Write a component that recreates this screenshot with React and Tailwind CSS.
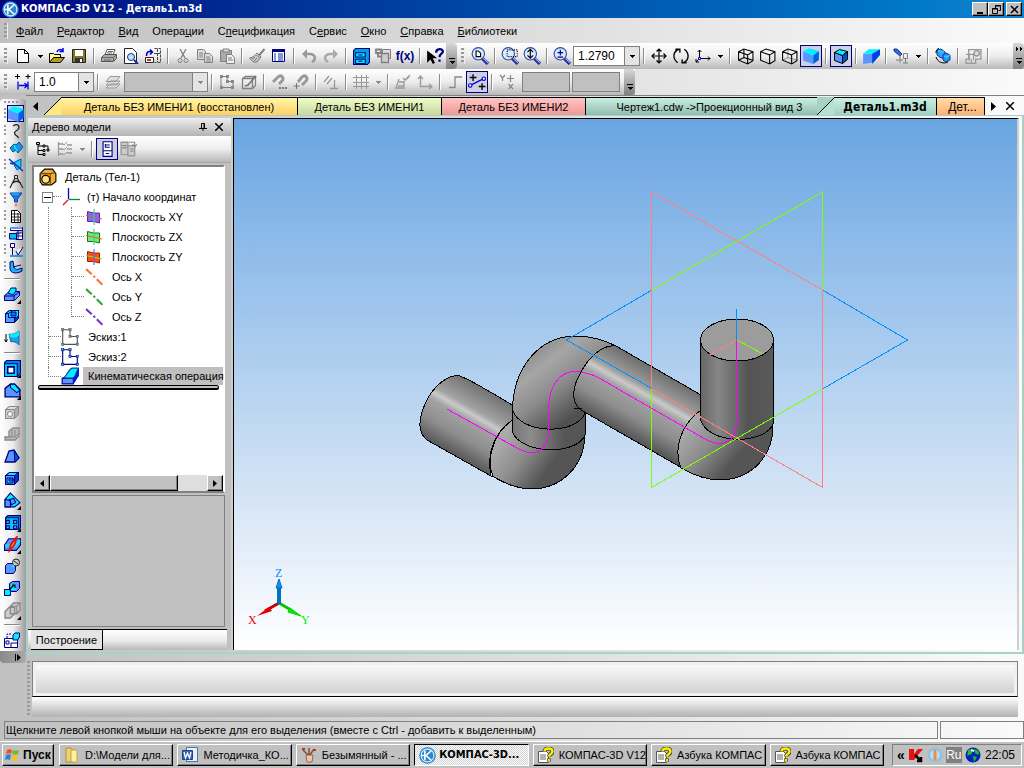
const NAVY = '#00007f';
const BLUE = '#5a96ff';
const CYAN = '#00f0ff';
const GRAY = '#808080';

function Svg({ size = 16, children }) {
	return (
		<svg width={size} height={size} viewBox="0 0 16 16" fill="none" className="shrink-0" aria-hidden="true">
			{children}
		</svg>
	);
}

function Magnifier({ children }) {
	return (
		<Svg size={18}>
			<path d="M10 10l5 5" stroke="#2a2a8c" strokeWidth="3" />
			<path d="M11 10l4 4" stroke="#8fb8ff" />
			<circle cx="6.5" cy="6" r="5.5" fill="#d9ecff" stroke="#2a4aa0" />
			{children}
		</Svg>
	);
}

function Solid({ front = BLUE, top = CYAN, side = '#0030d0', stroke = NAVY, children }) {
	return (
		<Svg>
			<path d="M1.5 5.5l4-3h9v8l-4 4h-9z" fill={side} stroke={stroke} />
			<path d="M1.5 5.5l4-3h9l-4 3z" fill={top} stroke={stroke} />
			<path d="M1.5 5.5h9v9h-9z" fill={front} stroke={stroke} />
			{children}
		</Svg>
	);
}

function WireBox({ hidden }) {
	return (
		<Svg size={17}>
			{hidden && <path d="M6.500 1v8L15 11.500M1.500 11.500l5-2.500" stroke={hidden} />}
			<path d="M1.500 3.500l5-2.500 8.500 2.500v8.500l-5 3-8.500-3.500zM1.500 3.500l8.500 3v8.500M10 6.500l5-3" stroke="#000" />
		</Svg>
	);
}

function Plane({ fill, edge, line }) {
	return (
		<Svg>
			<path d="M1.500 2.500l6 1.500 6 0v10l-6-1.500h-6z" fill={fill} stroke={edge} />
			<path d="M0 6.500l16 3.500" stroke={line} strokeWidth="1.200" />
			<path d="M8 0v16" stroke={line === '#70e070' ? '#6060ff' : '#60c080'} strokeWidth="1.200" />
		</Svg>
	);
}

function Axis({ color }) {
	return (
		<Svg size={18}>
			<path d="M1 1l5 4.500M7.500 7l1.500 1.500M10.500 10l5 5" stroke={color} strokeWidth="1.800" />
		</Svg>
	);
}

function Sketch({ color, dot }) {
	return (
		<Svg size={18}>
			<path d="M1.500 1.500h6.500v6h6.500v7h-13z" stroke={color} />
			{[[1.5, 1.5], [8, 1.5], [8, 7.5], [14.5, 7.5], [14.5, 14.5], [1.5, 14.5]].map(([x, y]) => (
				<rect key={`${x}-${y}`} x={x - 1} y={y - 1} width="2" height="2" fill={dot} stroke={color} strokeWidth=".5" />
			))}
		</Svg>
	);
}

function Logo() {
	return (
		<Svg size={17}>
			<circle cx="8" cy="8" r="7.800" fill="#2b86d0" />
			<circle cx="8" cy="8" r="6" stroke="#d8efff" />
			<path d="M5.500 3.500v9M6.500 8l5-4.500M6.500 8l5 4.500M2 8h4" stroke="#fff" strokeWidth="1.500" />
		</Svg>
	);
}

function HelpDoc() {
	return (
		<Svg>
			<path d="M.5 4.500h8l2 2v9h-10z" fill="#fff" stroke="#555" />
			<path d="M2 8h6M2 10h6M2 12h6" stroke="#666" />
			<path d="M6.500 4.500c0-4 8-4 8 0 0 2.500-3.500 2.500-3.500 5M11 11.500v3" stroke="#333" strokeWidth="4" />
			<path d="M6.500 4.500c0-4 8-4 8 0 0 2.500-3.500 2.500-3.500 5M11 12v2.500" stroke="#ffee00" strokeWidth="2.500" />
		</Svg>
	);
}

const icons = {
	newDoc: <Svg><path d="M2.500 1.500h7l4 4v9h-11z" fill="#fff" stroke="#000" /><path d="M9.500 1.500v4h4" stroke="#000" /></Svg>,
	open: <Svg><path d="M.5 14.500v-9h4l1 1h6v3" fill="#fffb90" stroke="#000" /><path d="M.5 14.500l4-5h11l-4 5z" fill="#b0a020" stroke="#000" /><path d="M8 4c1-3 4-3 6-1m0-3v3.500h-3.500" stroke="#0000e0" strokeWidth="1.500" /></Svg>,
	save: <Svg><path d="M1.500 1.500h13v13h-13z" fill="#857820" stroke="#222" /><path d="M4 2h8v6H4z" fill="#fff" /><path d="M4 10h8v4.500H4z" fill="#333" /><path d="M9 11h2v3H9z" fill="#fff" /></Svg>,
	print: <Svg><path d="M4 7l2-5.500h8L12 7" fill="#fff" stroke="#555" /><path d="M.5 9.500l3-3h12v4l-3 3H.5z" fill="#aaa" stroke="#555" /><path d="M.5 9.500h12v4M12.500 9.500l3-3M3 12h7M7 3.500h5M6 5h5" stroke="#666" /></Svg>,
	preview: <Svg><path d="M1.500.5h8l4 4v11h-12z" fill="#fff" stroke="#222" /><circle cx="8" cy="9" r="3.500" fill="#b9e4ff" stroke="#1a2a90" /><path d="M11 12l4 4" stroke="#1a2a90" strokeWidth="2" /></Svg>,
	swap: <Svg><path d="M9.500.5h6v14h-6M12.500 1v13M9 5.500h6" stroke="#444" strokeDasharray="3 1" /><path d="M1.500 8c0-5 3-5 5-4M5 1.500L7.500 4 5 6.500" stroke="#0000d0" strokeWidth="1.500" /><path d="M.5 9.500h8v5h-8z" fill="#fff" stroke="#222" /><path d="M2 11h4v2H2z" fill="#e02020" /></Svg>,
	cut: <Svg><path d="M5 1l5 9M11 1l-5 9" stroke={GRAY} strokeWidth="1.300" /><circle cx="5" cy="12.500" r="2" stroke={GRAY} /><circle cx="11" cy="12.500" r="2" stroke={GRAY} /></Svg>,
	copy: <Svg><path d="M.5 1.500h6l2 2v8h-8z" fill="#ddd" stroke={GRAY} /><path d="M7.500 5.500h5l3 3v6h-8z" fill="#ddd" stroke={GRAY} /><path d="M2 5h4M2 7h4M2 9h4M9 9h4M9 11h5M9 13h5" stroke={GRAY} /></Svg>,
	paste: <Svg><path d="M1.500 2.500h11v11h-11z" fill="#aaa" stroke={GRAY} /><path d="M4 1h6v3H4z" fill="#ddd" stroke={GRAY} /><path d="M7.500 6.500h5l3 3v6h-8z" fill="#eee" stroke={GRAY} /><path d="M9 10h4M9 12h5" stroke={GRAY} /></Svg>,
	brush: <Svg><path d="M15.500 1L10 7.500" stroke={GRAY} strokeWidth="2" /><path d="M8 5l4 4-4 5c-3 1-5-1-7.500-4C4 10 6 7 8 5z" fill="#c8c8c8" stroke="#777" /><path d="M3 11l3-2M5 13l3-3M7.500 7l3 3" stroke="#777" /></Svg>,
	sheet: <Svg><path d="M1.500 1.500h12v12h-12z" fill="#fff" stroke={NAVY} /><path d="M1 1h13v3H1z" fill={NAVY} /><path d="M3 6h2M7 6h5M3 8h2M7 8h5M3 10h2M7 10h5M3 12h2M7 12h5" stroke="#0030b0" /></Svg>,
	undo: <Svg><path d="M3 6h7c5 1 5 6 1 8" stroke="#999" strokeWidth="2.500" /><path d="M1 6l5-5v10z" fill="#999" /></Svg>,
	redo: <Svg><path d="M13 6H6c-5 1-5 6-1 8" stroke="#aaa" strokeWidth="2.500" /><path d="M15 6l-5-5v10z" fill="#aaa" /></Svg>,
	manager: <Svg size={17}><path d="M.5 2.500l2-2h13v13l-2 2H.5z" fill="#00a0e0" stroke={NAVY} /><path d="M2.500 4.500h9v4h-9zM2.500 10.500h9v4h-9z" fill={CYAN} stroke={NAVY} /><path d="M5 6.500h4M5 12.500h4" stroke={NAVY} /></Svg>,
	props: <Svg><path d="M7.500 1.500h8v9h-8z" fill="#ddd" stroke={GRAY} /><path d="M6.500 5.500h7v9h-7z" fill="#ccc" stroke={GRAY} strokeWidth="1.300" /><path d="M1 1.500h5v3.500H1zM3 5.500v3h4" stroke={GRAY} strokeWidth="1.800" /></Svg>,
	help: <Svg size={18}><path d="M1 3v11l3-3 2 4 2-1-2-4h4z" fill="#000" /><path d="M9 5c0-4 6-4 6-1 0 2-3 2-3 5M12 11v2" stroke={NAVY} strokeWidth="2" /></Svg>,
	zoomDoc: <Magnifier><path d="M4.500 3.500h2l2 2v3h-4z" fill="#fff" stroke="#000" /></Magnifier>,
	zoomWin: <Magnifier><path d="M5.500 2.500h9v6h-9z" stroke="#000" strokeDasharray="1 1" /></Magnifier>,
	zoomDyn: <Magnifier><path d="M6.500 2v8M4 4.500L6.500 2 9 4.500M4 7.500L6.500 10 9 7.500" stroke="#000" /></Magnifier>,
	zoomPm: <Magnifier><path d="M6.500 2.500v5M4 5h5M4 9h5" stroke={NAVY} /></Magnifier>,
	move: <Svg><path d="M8 1v14M1 8h14M5.500 3.500L8 1l2.500 2.500M5.500 12.500L8 15l2.500-2.500M3.500 5.500L1 8l2.500 2.500M12.500 5.500L15 8l-2.500 2.500" stroke="#000" strokeWidth="1.200" /></Svg>,
	rotate: <Svg size={18}><path d="M5 14C0 10 1 4 6 2M3 2h4v3M11 2c5 4 4 10-1 12M13 14H9v-3" stroke="#000" strokeWidth="1.200" /></Svg>,
	orient: <Svg><path d="M4.500 11V2M2.500 4l2-2 2 2M6 10.500h9M13 8.500l2 2-2 2M4 11l-3 3M1 11v3h3" stroke="#000" /><path d="M3.500 9.500h2v2h-2z" fill="#fff" stroke="#00f" /></Svg>,
	wire: <WireBox hidden="#000" />,
	noHidden: <WireBox />,
	thinHidden: <WireBox hidden="#999" />,
	shaded: <Svg size={18}><path d="M1 4l9 3.500V15L1 12z" fill={BLUE} /><path d="M1 4l5-3 9 2.500-5 4z" fill={CYAN} /><path d="M10 7.500l5-4v8L10 15z" fill="#0060e8" /></Svg>,
	shadedEdge: <Svg><path d="M1.500 4.500l8 3v8l-8-3z" fill={BLUE} stroke="#000" /><path d="M1.500 4.500l5-3 8 2-5 4z" fill={CYAN} stroke="#000" /><path d="M9.500 7.500l5-4v8l-5 4z" fill="#0050c8" stroke="#000" /></Svg>,
	persp: <Svg size={18}><path d="M1 6h8v8l-8 1z" fill={BLUE} /><path d="M1 6l5-4h10L9 6z" fill={CYAN} /><path d="M9 6l7-4v5l-7 8z" fill="#0040e0" /></Svg>,
	lightTree: <Svg><path d="M1 1h3l5 5-2 2-6-5z" fill="#3070e0" stroke="#1a2a90" /><path d="M7 7v8M7 12H3M7 12h3M10 15h5M12.500 11v4M10.500 5.500h4v5h-4z" stroke={GRAY} /></Svg>,
	rebuild: <Svg><path d="M2 2l4-1 4 3v5L6 10 2 7z" fill="#4098ff" stroke="#1030a0" /><path d="M8 7l3-2 4 2v5l-4 2-3-2z" fill="#3090f0" stroke="#1030a0" /><path d="M3 2l3 2 3-1M9 8l3 1 3-2" stroke={CYAN} strokeWidth="1.300" /><path d="M1 9c2 6 8 7 12 5M1 5C1 2 2 1 4 .5" stroke="#000" /></Svg>,
	coil: <Svg size={17}><path d="M3.500 1.500h11.500v9h-5v4h-9v-4h2.500z" stroke="#999" strokeWidth="1.300" /><path d="M4 12V6h4v5M1 6h3M6 14v-4" stroke="#999" /><circle cx="11" cy="5" r="2.500" fill="#ddd" stroke="#999" strokeWidth="1.300" /></Svg>,
	step: <Svg><path d="M2.500 0v5M0 2.500h5M13 0v5M10.500 2.500h5" stroke="#000" /><path d="M3 7.500v8M13 7.500v8M4 11.500h8M9.500 9l3 2.500-3 2.500" stroke="#0000e8" strokeWidth="1.300" /></Svg>,
	layers: <Svg><path d="M1 14l4-4h10l-4 4zM1 11l4-4h10l-4 4zM1 7.500l4-5h10l-4 5z" fill="#ddd" stroke="#999" /></Svg>,
	sketchOff: <Svg><path d="M2 2.500h6v5h6v6H2z" stroke={GRAY} /><path d="M1 1h3v3H1zM7 1h3v3H7zM7 6h3v3H7zM12 6h3v3h-3zM1 12h3v3H1zM12 12h3v3h-3z" fill="#888" /></Svg>,
	editSketch: <Svg><path d="M1.500 4.500l3-2h10v9l-3 3h-10zM1.500 4.500h10v10M11.500 4.500l3-2" stroke={GRAY} strokeWidth="1.300" /><path d="M4 12l3-1 8-9" stroke="#777" strokeWidth="1.800" /></Svg>,
	magnetDots: <Svg><path d="M2 8l5-5c3-3 7 1 4 4l-3 3" stroke="#999" strokeWidth="3" /><path d="M8 14h2M11 14h2M14 14h2" stroke="#777" strokeWidth="2" /></Svg>,
	magnet: <Svg><path d="M5 8l4-5c3-3 7 1 4 4l-4 4" stroke="#999" strokeWidth="3" /><path d="M3.500 9v6M.5 12h6" stroke="#777" /></Svg>,
	perp: <Svg><path d="M1 8l5-6M4 10l5-6M7 14.500h8M11.500 6v9" stroke="#999" strokeWidth="1.300" /></Svg>,
	grid: <Svg><path d="M3.500 1v14M8.500 1v14M13.500 1v14M0 3.500h16M0 8.500h16M0 12.500h16" stroke="#999" /></Svg>,
	check: <Svg><path d="M4 5l-3 9h9M4 8h5v4H3M8 4l2 2 5-5M8 8l6-5" stroke="#999" strokeWidth="1.300" /></Svg>,
	lcs: <Svg><path d="M3.500 13V2M1 5l2.500-3L6 5M3 12.500h11M12 10l3 2.500-3 2.500" stroke="#999" strokeWidth="1.300" /></Svg>,
	ortho: <Svg><path d="M2 13.500h6V3h7" stroke="#888" strokeWidth="1.300" /></Svg>,
	snap: <Svg size={18}><path d="M2 11L14 5" stroke="#00c" /><circle cx="2" cy="11" r="1.500" fill="#fff" stroke="#00c" /><circle cx="14" cy="5" r="1.500" fill="#fff" stroke="#00c" /><path d="M4.500 1v6M1.500 4h6M12.500 9v6M9.500 12h6" stroke="#000" strokeWidth="1.200" /></Svg>,
	xy: <Svg><path d="M1 1l2.500 3L6 1M3.500 4v3M11.500 1v7M8 4.500h7M9.500 10l4.500 5M14 10l-4.500 5" stroke="#888" strokeWidth="1.200" /></Svg>,
	curve: <Svg><path d="M5 3c6-4 8 2 3 5s4 6 2 7" stroke="#222" strokeWidth="1.300" /></Svg>,
	surface: <Svg><path d="M2 8l4-4 2 1 3-3 4 5-5 6-2-3-3 2z" fill="#2090e0" stroke="#0050a0" /><path d="M6 5l3 6" stroke={CYAN} strokeWidth="1.500" /></Svg>,
	auxGeom: <Svg><path d="M5 6l8-4v8l-4 3z" fill="#20c8f0" stroke="#0050b0" /><path d="M1 2l14 12M2 6l3 1" stroke="#0030d0" strokeWidth="1.500" /></Svg>,
	measure: <Svg><path d="M7.500 3L2 14M8.500 3L15 14M4 9.500c3-3 6-3 9 0" stroke="#222" strokeWidth="1.200" /><path d="M6.500 1.500h3v3h-3z" fill="#ddd" stroke="#222" /></Svg>,
	filter: <Svg><path d="M2 2h12l-4.500 6v3h-3V8z" fill="#1878e0" stroke="#1040b0" /><path d="M4 3h7" stroke={CYAN} /><circle cx="8" cy="14" r="1.500" fill="#ff8060" /></Svg>,
	spec: <Svg><path d="M3.500 2.500h6l3 3v9h-9z" fill="#fff" stroke="#000" /><path d="M4 6h9M4 9h9M4 12h9M6.500 3v11M10 5v9" stroke="#000" strokeWidth=".8" /></Svg>,
	report: <Svg><path d="M2.500 2.500h12v3h-12zM10 6v8M14.500 6v8.500H8M8 8h6M10 11h5" fill="#fff" stroke={NAVY} /><path d="M2 2h12v2H2z" fill={BLUE} /><path d="M1.500 8.500h7v5.500h-7z" fill="#00c0f0" stroke={NAVY} /></Svg>,
	dims: <Svg><path d="M2.500 1.500h4v4h-4zM4.500 6v7M8 9l2 4 5-8" fill="#fff" stroke={NAVY} /><path d="M2 14h13" stroke="#1890e0" strokeWidth="1.800" /></Svg>,
	sheetBody: <Svg><path d="M2 3l3-1 1 6c1 3 3 3 8 1v3c-5 3-12 3-12-3z" fill="#20b0f0" stroke={NAVY} /><path d="M5 8l8-2" stroke={NAVY} /></Svg>,
	extrude: <Svg><path d="M.5 9.500l5-4h10v4l-5 5H.5z" fill={BLUE} stroke={NAVY} /><path d="M4 7l3-5h5v3l-3 4z" fill={CYAN} stroke={NAVY} /><path d="M1 10h9l5-4M10 10v4" stroke={NAVY} /></Svg>,
	cutExt: <Solid><path d="M4.500 5.500v4h8l2-2v-5h-6z" fill={CYAN} stroke={NAVY} /><path d="M7 4h5v4H7z" fill="#0080e0" stroke={NAVY} /></Solid>,
	thicken: <Svg><path d="M2 4v8M.5 9.500l1.500 2.500 1.500-2.500" stroke="#000" /><path d="M5 4c4 1 7-1 10-3v14c-2-3-6-4-8-3z" fill="#20a0e8" stroke="#1060b0" /><path d="M5 4c4 1 7-1 10-3v4c-2 3-5 3-9 2z" fill={CYAN} /></Svg>,
	hole: <Svg size={17}><path d="M.5 2.500l2-2h13v12l-3 3H.5z" fill="#0080e0" stroke={NAVY} /><path d="M.5 3.500h12v12H.5z" fill="#00d0f0" stroke={NAVY} /><path d="M3.500 6.500h6v6h-6z" fill="#fff" stroke={NAVY} strokeWidth="1.500" /></Svg>,
	chamfer: <Svg size={17}><path d="M1 6l5-4h4l5 5v7H1z" fill={BLUE} stroke={NAVY} strokeWidth="1.300" /><path d="M6 2h4l5 6-3 2-6-5z" fill={CYAN} stroke={NAVY} /></Svg>,
	holeOff: <Solid front="#ccc" top="#ddd" side="#aaa" stroke="#888"><circle cx="6" cy="10" r="2.500" fill="#fff" stroke="#888" /></Solid>,
	ribOff: <Svg><path d="M1 11h4V5l4-3h6v8l-4 4H1z" fill="#bbb" stroke="#888" strokeWidth="1.300" /><path d="M5 11h6l4-4M8 4v7M11 4v7" stroke="#888" /></Svg>,
	draft: <Svg><path d="M1 14L5 3l5-1 5 8-4 4z" fill={BLUE} stroke={NAVY} strokeWidth="1.300" /><path d="M10 2l5 8-4 4z" fill="#0050e0" stroke={NAVY} /></Svg>,
	shell: <Solid><path d="M3 8h6v5H3z" fill={CYAN} stroke={NAVY} /><path d="M5 9h4v2H5z" fill={BLUE} stroke={NAVY} /></Solid>,
	section: <Svg size={17}><path d="M1 7l5-6 9 9-5 4H1z" fill={CYAN} stroke={NAVY} /><path d="M1 7l5 1v6H1zM5 7l4-1 2 4-4 2z" fill={BLUE} stroke={NAVY} /></Svg>,
	array: <Svg size={17}><path d="M1.500 3.500l2-2h12v11l-2 2h-12z" fill="#0090e0" stroke={NAVY} /><path d="M1.500 3.500h12v11h-12z" fill="#00c8f0" stroke={NAVY} /><path d="M2 6h3v3H2zM9 6h3v3H9zM2 11h3v3H2zM9 11h3v3H9z" fill={BLUE} stroke={NAVY} /></Svg>,
	split: <Svg size={17}><path d="M.5 8.500l4-6h11v6l-4 5H.5z" fill={BLUE} stroke={NAVY} /><path d="M1 9h10l4-5" stroke={CYAN} strokeWidth="2" /><path d="M5 14c0-5 2-8 7-13l-2 7z" fill="#ff9020" stroke="#e01010" strokeWidth="1.500" /></Svg>,
	boss: <Svg><path d="M1.500 7.500l2-2h8v7l-2 3h-8z" fill={BLUE} stroke={NAVY} /><circle cx="12" cy="4.500" r="3.500" fill="#ccc" stroke="#222" /><path d="M10 3l4 3" stroke="#222" /><path d="M8 9l2-2" stroke={CYAN} strokeWidth="2" /></Svg>,
	move2: <Svg><path d="M5.500 3.500l3-2h7v7l-3 3h-7z" fill={BLUE} stroke={NAVY} /><path d="M7 4h5v6H7z" fill={CYAN} /><path d="M.5 9.500h6v6h-6z" fill={CYAN} stroke={NAVY} /><path d="M5 10l5-5M8 5h3v3" stroke="#000" strokeWidth="1.200" /></Svg>,
	cloneOff: <Svg size={17}><path d="M1 9l4-4h5v6l-4 4H1zM6 4l3-3h6v7l-3 3H6z" fill="#ccc" stroke="#888" strokeWidth="1.300" /><path d="M6 4h6v7M12 4l3-3" stroke="#888" /></Svg>,
	drawing: <Svg><path d="M.5 6.500h13v9H.5zM7 15v-4h6M2 9h3v3H2z" fill="#fff" stroke={NAVY} /><path d="M9 3l2-2h4.500v4l-2 3H9z" fill={CYAN} stroke={NAVY} /><path d="M3 6V2h4" stroke="#00c" strokeDasharray="2 1" /></Svg>,
	treeView: <Svg><path d="M3 1v12.500h5M3 5h5M3 9.500h5M10 5h3v4" stroke="#000" /><path d="M1.500 1.500h3v2h-3zM8 4h2v2H8zM8 8.500h2v2H8zM8 12.500h2v2H8zM12 8h2v2h-2z" fill="#e8f080" stroke="#000" /></Svg>,
	list: <Svg><path d="M1.500 1v14M2 3h4M2 8h4M2 13h4M10 4h5M10 8h5M10 12h5" stroke="#999" strokeWidth="1.300" /><path d="M5 2l2 2 3-3M5 7l2 2 3-3M5 12l2 2 3-3" stroke="#999" /></Svg>,
	panes: <Svg size={18}><path d="M4.500 1.500h8v13h-8zM4.500 9.500h8" fill="#fff" stroke={NAVY} /><path d="M6.500 3.500v3h4M6.500 4.500h4M7 12h3" stroke={NAVY} strokeWidth=".9" /></Svg>,
	panesOff: <Svg size={18}><path d="M1 2h6v11H1zM7 5h6v9H7z" fill="#ccc" stroke="#999" strokeWidth="1.300" /><path d="M2 5h4M2 7h4M9 8h3M9 10h3M8 2h5v4M11 4l2 2 2-2" stroke="#888" /></Svg>,
};

const face = 'bg-[#c0c0c0]';
const raised = 'border border-t-white border-l-white border-r-black border-b-black shadow-[inset_-1px_-1px_0_#808080]';
const barFill = 'bg-gradient-to-b from-white via-[#ededed] to-[#b9b9b9]';

function Grip() {
	return <span className="w-1 h-4 mx-1 shrink-0 bg-[repeating-linear-gradient(to_bottom,#999_0_2px,transparent_2px_4px)] border-r border-[#eee]" />;
}

function Sep() {
	return <span className="w-[2px] h-4 mx-[3px] shrink-0 bg-[#8c8c8c] border-r border-white" />;
}

function Tool({ icon, active, label, children }) {
	return (
		<button
			aria-label={label || icon}
			className={`w-[22px] h-[22px] shrink-0 flex items-center justify-center ${active ? 'bg-[#cfcfe4] border border-[#00007f]' : ''}`}
		>
			{children || icons[icon]}
		</button>
	);
}

function Drop({ gray }) {
	return (
		<button aria-label="Список" className="w-3 h-[22px] shrink-0 flex items-center justify-center">
			<svg width="5" height="3" viewBox="0 0 5 3" shapeRendering="crispEdges"><path d="M0 0h5L2.500 3z" fill={gray ? '#888' : '#000'} /></svg>
		</button>
	);
}

function More({ arrows }) {
	return (
		<button aria-label="Ещё" className="w-[11px] h-[26px] shrink-0 rounded-r bg-gradient-to-b from-[#d8d8d8] to-[#808080] flex flex-col items-center justify-end pb-1">
			<svg width="8" height="18" viewBox="0 0 8 18" fill="none" shapeRendering="crispEdges">
				{arrows && <path d="M1 0l2 2-2 2zM5 0l2 2-2 2z" fill="#000" />}
				<path d="M1 11.500h6" stroke="#000" />
				<path d="M1 14h6l-3 3z" fill="#000" />
			</svg>
		</button>
	);
}

function Combo({ value, width, disabled, label }) {
	return (
		<span className={`${width} h-5 shrink-0 flex border border-[#808080] ${disabled ? 'bg-[#c0c0c0]' : 'bg-white'}`}>
			<select aria-label={label} disabled={disabled} className="appearance-none flex-1 min-w-0 pl-1 bg-transparent text-[12px] leading-[18px]">
				<option>{value}</option>
			</select>
			<span className="w-[15px] border-l border-[#808080] bg-[#e4e4e4] flex items-center justify-center">
				<svg width="5" height="3" viewBox="0 0 5 3" shapeRendering="crispEdges"><path d="M0 0h5L2.500 3z" fill={disabled ? '#888' : '#000'} /></svg>
			</span>
		</span>
	);
}

// '|' is a separator, 'v' a small drop-down arrow, a leading '*' marks a pressed button
function Tools({ items }) {
	return items.split(' ').map((item, i) => {
		if (item === '|') return <Sep key={i} />;
		if (item === 'v' || item === 'V') return <Drop key={i} gray={item === 'V'} />;
		const active = item[0] === '*';
		return <Tool key={i} icon={active ? item.slice(1) : item} active={active} />;
	});
}

const menus = ['Файл', 'Редактор', 'Вид', 'Операции', 'Спецификация', 'Сервис', 'Окно', 'Справка', 'Библиотеки'];
const hotkeys = [0, 0, 0, 5, 1, 1, 0, 0, 0];

function TitleBar() {
	const box = `w-4 h-[14px] ${face} ${raised} flex items-center justify-center`;
	return (
		<header className="h-[18px] flex items-center px-[2px] bg-gradient-to-r from-[#000080] to-[#1084d0] text-white">
			<Logo />
			<h1 className="flex-1 ml-[2px] text-[11px] leading-4 font-bold font-['DejaVu_Sans_Condensed','DejaVu_Sans',sans-serif]">КОМПАС-3D V12 - Деталь1.m3d</h1>
			<button aria-label="Свернуть" className={box}><svg width="9" height="9" viewBox="0 0 9 9"><path d="M1 7h6v2H1z" /></svg></button>
			<button aria-label="Восстановить" className={box}><svg width="9" height="9" viewBox="0 0 9 9" fill="none" stroke="#000"><path d="M3.500 3V.5h5v5H6.500M3 1h6M.5 3.500h5v5h-5zM0 4h6" /></svg></button>
			<button aria-label="Закрыть" className={`${box} ml-[2px]`}><svg width="9" height="9" viewBox="0 0 9 9" stroke="#000" strokeWidth="1.500"><path d="M1 1l7 7M8 1L1 8" /></svg></button>
		</header>
	);
}

function MenuBar() {
	return (
		<nav className="h-[25px] flex items-center">
			<Grip />
			<div className="flex gap-[14px] ml-1">
				{menus.map((name, i) => (
					<button key={name} className="whitespace-nowrap">
						{name.slice(0, hotkeys[i])}
						<u>{name[hotkeys[i]]}</u>
						{name.slice(hotkeys[i] + 1)}
					</button>
				))}
			</div>
		</nav>
	);
}

function Toolbars() {
	return (
		<>
			<div className="h-[26px] flex">
				<div className={`flex items-center ${barFill}`}>
					<Grip />
					<Tools items="newDoc v open save | print preview swap | cut copy paste | brush sheet | undo redo | manager props" />
					<Tool label="Переменные"><span className="text-[#00007f] text-[12px] font-bold">f(x)</span></Tool>
					<Tools items="| help" />
					<More />
				</div>
				<div className={`flex-1 min-w-0 flex items-center ${barFill}`}>
					<Grip />
					<Tools items="zoomDoc | zoomWin zoomDyn | zoomPm" />
					<Combo value="1.2790" width="w-[67px]" label="Масштаб" />
					<Tools items="| move rotate orient v | wire noHidden thinHidden *shaded | *shadedEdge | persp | lightTree v | rebuild | coil |" />
					<span className="flex-1" />
					<More arrows />
				</div>
			</div>
			<div className="h-[26px] flex">
				<div className={`flex items-center ${barFill}`}>
					<Grip />
					<Tools items="step" />
					<Combo value="1.0" width="w-[60px]" label="Шаг" />
					<Tools items="| layers" />
					<Combo value="" width="w-[84px]" disabled label="Слой" />
					<Tools items="| sketchOff editSketch | magnetDots magnet | perp | grid V | check lcs | ortho *snap | xy" />
					<div className="flex gap-[2px] ml-1 mr-1">
						<input aria-label="Координата X" disabled className="w-12 h-5 border border-[#808080] bg-[#c0c0c0]" />
						<input aria-label="Координата Y" disabled className="w-12 h-5 border border-[#808080] bg-[#c0c0c0]" />
					</div>
					<More />
				</div>
			</div>
		</>
	);
}

const modes = ['shaded', 'curve', 'surface', 'auxGeom', 'measure', 'filter', 'spec', 'report', 'dims', 'sheetBody'];

function SideTool({ icon, more }) {
	return (
		<button aria-label={icon} className="w-6 h-[22px] shrink-0 flex items-center justify-center relative">
			{icons[icon]}
			{more && <svg width="4" height="4" viewBox="0 0 4 4" className="absolute right-[3px] bottom-[1px]"><path d="M4 0v4H0z" /></svg>}
		</button>
	);
}

function SideBar() {
	const line = <span className="h-[2px] w-4 my-[3px] mx-1 shrink-0 bg-[#888] border-b border-white" />;
	return (
		<aside className="w-[26px] shrink-0 flex flex-col pt-1">
			<div className="flex flex-col rounded-t bg-gradient-to-r from-white via-[#ececec] to-[#9c9c9c]">
				<span className="w-4 h-[2px] mx-1 my-[2px] bg-[repeating-linear-gradient(to_right,#999_0_2px,transparent_2px_4px)]" />
				{modes.map((m, i) => (
					<button key={m} aria-label={m} className="h-[17px] flex items-center">
						<span className="w-[2px] h-3 ml-1 mr-px shrink-0 bg-[repeating-linear-gradient(to_bottom,#999_0_2px,transparent_2px_4px)]" />
						<span className={`w-[17px] h-[17px] flex items-center justify-center ${i === 0 ? 'border border-[#00007f] bg-[#cfcfe4]' : ''}`}>{icons[m]}</span>
					</button>
				))}
				{line}
				<SideTool icon="extrude" more />
				<SideTool icon="cutExt" />
				<SideTool icon="thicken" />
				{line}
				<SideTool icon="hole" more />
				<SideTool icon="chamfer" more />
				<SideTool icon="holeOff" />
				<SideTool icon="ribOff" />
				<SideTool icon="draft" />
				<SideTool icon="shell" />
				<SideTool icon="section" more />
				<SideTool icon="array" more />
				<SideTool icon="split" more />
				<SideTool icon="boss" />
				<SideTool icon="move2" />
				<SideTool icon="cloneOff" more />
				{line}
				<SideTool icon="drawing" />
			</div>
			<button aria-label="Ещё" className="h-3 rounded-b bg-gradient-to-r from-[#888] to-[#aaa] flex items-center justify-end pr-1">
				<svg width="7" height="7" viewBox="0 0 7 7"><path d="M0 0h1v7H0zM2 0l4 3.500L2 7z" /></svg>
			</button>
		</aside>
	);
}

function Slant({ left, right }) {
	return (
		<svg width="18" height="18" viewBox="0 0 18 18" className="shrink-0 -mr-px" aria-hidden="true">
			<rect width="18" height="18" fill={left} />
			<path d="M0 18L18 0v18z" fill={right} />
			<path d="M0 18L18 0" stroke="#000" />
		</svg>
	);
}

const tab = 'h-[18px] border-t border-r border-black whitespace-nowrap overflow-hidden leading-4';

function DocTabs() {
	return (
		<div role="tablist" className="h-5 pt-[1px] flex items-center border-t border-[#808080]">
			<button aria-label="Назад" className="w-[18px] flex justify-center"><svg width="5" height="9" viewBox="0 0 5 9"><path d="M5 0v9L0 4.500z" /></svg></button>
			<Slant left="none" right="#ffe884" />
			<button role="tab" className={`${tab} w-[237px] bg-gradient-to-b from-[#fff6a8] to-[#ffd060]`}>Деталь БЕЗ ИМЕНИ1 (восстановлен)</button>
			<button role="tab" className={`${tab} w-36 bg-gradient-to-b from-[#effcc8] to-[#c8d8a0]`}>Деталь БЕЗ ИМЕНИ1</button>
			<button role="tab" className={`${tab} w-36 bg-gradient-to-b from-[#ffc4c4] to-[#f09898]`}>Деталь БЕЗ ИМЕНИ2</button>
			<button role="tab" className={`${tab} w-[231px] border-r-0 pl-4 bg-gradient-to-b from-[#c8f0e2] to-[#94bcae]`}>Чертеж1.cdw -&gt;Проекционный вид 3</button>
			<Slant left="#a8d2c4" right="#b4e2d2" />
			<button role="tab" aria-selected="true" className={`${tab} w-[103px] font-bold text-[12px] font-['DejaVu_Sans_Condensed','DejaVu_Sans',sans-serif] bg-gradient-to-b from-[#c8f0e2] to-[#a0d0c0]`}>Деталь1.m3d</button>
			<button role="tab" className={`${tab} w-12 pl-1 text-[12px] bg-gradient-to-b from-[#ffdca8] to-[#ffb070]`}>Дет...</button>
			<button aria-label="Вперёд" className="w-4 flex justify-center"><svg width="5" height="9" viewBox="0 0 5 9"><path d="M0 0v9l5-4.500z" /></svg></button>
			<button aria-label="Закрыть вкладку" className="flex-1 flex justify-center pr-[6px]"><svg width="8" height="8" viewBox="0 0 8 8" stroke="#000" strokeWidth="1.500"><path d="M0 0l8 8M8 0L0 8" /></svg></button>
		</div>
	);
}

const planes = [
	['Плоскость XY', <Plane fill="#7070ff" edge="#7020a0" line="#ff5020" />],
	['Плоскость ZX', <Plane fill="#60f080" edge="#207020" line="#ff5020" />],
	['Плоскость ZY', <Plane fill="#ff5000" edge="#a02000" line="#70e070" />],
	['Ось X', <Axis color="#ff7030" />],
	['Ось Y', <Axis color="#30a030" />],
	['Ось Z', <Axis color="#7030d0" />],
];

const operations = [
	['Эскиз:1', <Sketch color="#555" dot="#999" />],
	['Эскиз:2', <Sketch color="#000080" dot="#30c0e0" />],
];

function Tree() {
	const elbow = 'h-[10px] shrink-0 self-start border-b border-dotted border-[#808080]';
	return (
		<ul className="shrink-0 whitespace-nowrap">
			<li className="h-5 flex items-center pl-[5px]">
				<Svg size={18}>
					<path d="M1 5l4-4h7l3 4v7l-4 3H3l-2-3z" fill="#f0b030" stroke="#000" />
					<path d="M1 5h9l5-1M10 5v10" stroke="#7a4a00" />
					<circle cx="6" cy="10" r="3.500" fill="#ffe090" stroke="#000" />
				</Svg>
				<span className="ml-2">Деталь (Тел-1)</span>
			</li>
			<li className="ml-[14px]">
				<div className="h-5 flex items-center -ml-[6px]">
					<button aria-label="Свернуть узел" className="w-[11px] h-[11px] border border-[#808080] bg-white flex items-center justify-center"><span className="w-[7px] h-px bg-black" /></button>
					<span className={`${elbow} w-2 mr-px`} />
					<svg width="18" height="18" viewBox="0 0 18 18" fill="none"><path d="M6.500 0v11" stroke="#00c" strokeWidth="1.300" /><path d="M6.500 11.500H18" stroke="#108040" strokeWidth="1.300" /><path d="M6 12l-5 5" stroke="#e01010" strokeWidth="1.300" /></svg>
					<span className="ml-[7px]">(т) Начало координат</span>
				</div>
				<ul className="border-l border-dotted border-[#808080] pl-[22px]">
					{planes.map(([name, icon], i) => (
						<li key={name} className="h-5 flex items-center">
							<span className={`border-l border-dotted border-[#808080] ${i === 5 ? 'h-[10px] self-start' : 'self-stretch'}`} />
							<span className={`${elbow} w-3`} />
							<span className="w-5 flex justify-center">{icon}</span>
							<span className="ml-2">{name}</span>
						</li>
					))}
				</ul>
				{operations.map(([name, icon]) => (
					<div key={name} className="h-5 flex items-center border-l border-dotted border-[#808080]">
						<span className={`${elbow} w-3`} />
						{icon}
						<span className="ml-[9px]">{name}</span>
					</div>
				))}
				<div className="h-[18px] flex items-center">
					<span className={`${elbow} w-[13px] border-l`} />
					<Svg size={18}><path d="M1 10c4 0 5-8 9-9h6c-3 3-2 6-5 9z" fill={CYAN} stroke="#0040a0" /><path d="M1 10h10v5H1z" fill={BLUE} stroke={NAVY} /><path d="M11 10c3-3 2-6 5-9v7c-2 2-2 4-5 7z" fill="#0020d0" /></Svg>
					<span className="ml-1 pl-[5px] flex-1 min-w-0 h-[18px] leading-[18px] bg-[#c0c0c0]">Кинематическая операция</span>
				</div>
			</li>
		</ul>
	);
}

function TreePanel() {
	const scroll = `w-4 h-4 shrink-0 ${face} ${raised} flex items-center justify-center`;
	return (
		<section className={`w-[203px] shrink-0 flex flex-col ${face}`}>
			<div className="h-[18px] shrink-0 flex items-center pl-1 bg-gradient-to-b from-[#eee] to-[#b4b4b4]">
				<h2 className="flex-1">Дерево модели</h2>
				<button aria-label="Закрепить" className="w-4 flex justify-center"><svg width="8" height="8" viewBox="0 0 8 8" fill="none" stroke="#000"><path d="M2.500 5V.5h3V5M5 0v5M0 5.500h8M4 6v2" /></svg></button>
				<button aria-label="Закрыть панель" className="w-4 mr-1 flex justify-center"><svg width="8" height="8" viewBox="0 0 8 8" stroke="#000" strokeWidth="1.500"><path d="M0 0l8 8M8 0L0 8" /></svg></button>
			</div>
			<div className={`h-[27px] shrink-0 flex items-center pl-1 border-b border-[#a8a8a8] ${barFill}`}>
				<Tools items="treeView list V | *panes panesOff" />
			</div>
			<div className="h-[328px] shrink-0 ml-1 mt-[2px] mr-[6px] flex flex-col border-2 border-[#808080] border-r-white bg-white">
				<Tree />
				<div className="h-1 shrink-0 mx-1 rounded border border-black bg-[#c0c0c0] shadow-[0_1px_0_#000]" />
				<span className="flex-1" />
				<div className="flex bg-[#dedede]">
					<button aria-label="Влево" className={scroll}><svg width="4" height="7" viewBox="0 0 4 7"><path d="M4 0v7L0 3.500z" /></svg></button>
					<span className={`w-32 h-4 ${face} ${raised}`} />
					<span className="flex-1" />
					<button aria-label="Вправо" className={scroll}><svg width="4" height="7" viewBox="0 0 4 7"><path d="M0 0v7l4-3.500z" /></svg></button>
				</div>
			</div>
			<div className="flex-1 ml-1 mt-[2px] mr-[6px] mb-[2px] border border-[#808080] bg-[#c0c0c0]" />
			<div className={`h-[21px] shrink-0 flex border-t border-black mr-1 pl-[3px] ${barFill}`}>
				<button className="w-[72px] bg-[#e4e4e4] border-r border-b border-black">Построение</button>
			</div>
		</section>
	);
}

function Viewport() {
	return (
		<div className="flex-1 min-w-0 border-t border-l border-black border-r-2 border-r-[#d0d0d0] bg-[linear-gradient(to_bottom,#69a6e1,#7cb0e6_12%,#a9cbee_42%,#d6e5f6_72%,#fff)]">
			<svg className="w-full h-full block" viewBox="235 119 783 531" fill="none" aria-label="Модель">
				<defs>
					<linearGradient id="tubeA" gradientUnits="userSpaceOnUse" x1="470" y1="381" x2="434" y2="444">
						<stop offset="0" stopColor="#747474" /><stop offset=".3" stopColor="#a2a2a2" /><stop offset=".38" stopColor="#cacaca" />
						<stop offset=".47" stopColor="#a2a2a2" /><stop offset=".72" stopColor="#8e8e8e" /><stop offset="1" stopColor="#555" />
					</linearGradient>
					<linearGradient id="tubeB" gradientUnits="userSpaceOnUse" x1="660" y1="370" x2="624" y2="434">
						<stop offset="0" stopColor="#6c6c6c" /><stop offset=".3" stopColor="#a0a0a0" /><stop offset=".38" stopColor="#cacaca" />
						<stop offset=".47" stopColor="#a2a2a2" /><stop offset=".72" stopColor="#8e8e8e" /><stop offset="1" stopColor="#555" />
					</linearGradient>
					<linearGradient id="tubeV" gradientUnits="userSpaceOnUse" x1="701" y1="0" x2="775" y2="0">
						<stop offset="0" stopColor="#666" /><stop offset=".25" stopColor="#868686" /><stop offset=".65" stopColor="#545454" /><stop offset="1" stopColor="#5a5a5a" />
					</linearGradient>
					<linearGradient id="neck" gradientUnits="userSpaceOnUse" x1="513" y1="0" x2="587" y2="0">
						<stop offset="0" stopColor="#777" /><stop offset=".25" stopColor="#8c8c8c" /><stop offset=".7" stopColor="#565656" /><stop offset="1" stopColor="#555" />
					</linearGradient>
					<linearGradient id="bendA" gradientUnits="userSpaceOnUse" x1="510" y1="430" x2="565" y2="470">
						<stop offset="0" stopColor="#aaa" /><stop offset=".4" stopColor="#8c8c8c" /><stop offset=".8" stopColor="#555" />
					</linearGradient>
					<linearGradient id="bendB" gradientUnits="userSpaceOnUse" x1="525" y1="350" x2="575" y2="415">
						<stop offset="0" stopColor="#888" /><stop offset=".3" stopColor="#a6a6a6" /><stop offset=".6" stopColor="#8c8c8c" /><stop offset="1" stopColor="#505050" />
					</linearGradient>
					<linearGradient id="bendC" gradientUnits="userSpaceOnUse" x1="695" y1="420" x2="750" y2="465">
						<stop offset="0" stopColor="#aaa" /><stop offset=".4" stopColor="#8a8a8a" /><stop offset=".8" stopColor="#555" />
					</linearGradient>
				</defs>
				<g stroke="#000" shapeRendering="crispEdges">
					<path d="M458 375.500Q464 375 513 405v16C498 430 487 450 492 476L428 440C420 434 419 422 424 409 430 391 445 376 458 375.500z" fill="url(#tubeA)" />
					<path d="M513.500 420C497 431 486 456 494 476.500c14 8 24 12 38 12.500 30 0 53-22 54-54z" fill="url(#bendA)" />
					<path d="M513.500 408v24c8 22 64 24 72.500 3v-25z" fill="url(#neck)" />
					<path d="M513.500 410C514 368 540 336 577 336c16 0 27 4 40 10l-20 66-11 1c-8 22-64 22-72.500-3z" fill="url(#bendB)" />
					<path d="M617 346L702 395v15C686 422 673 450 683 468L582 410C571 402 574 386 581 374 589 358 603 344 617 346z" fill="url(#tubeB)" />
					<path d="M575 408.500h8" />
					<path d="M702 410c-20 14-28 39-20 58 14 8 26 12 40 12 31-1 52-24 52-54z" fill="url(#bendC)" />
					<path d="M701.500 340v80c8 25 64 25 72.500 4v-84z" fill="url(#tubeV)" />
					<ellipse cx="738" cy="340" rx="36.500" ry="21" fill="#9c9c9c" />
				</g>
				<g shapeRendering="crispEdges">
					<path d="M653 290L567.500 340 653 388.500M823.500 290l85 50-85 49M737.500 309v31" stroke="#0090ff" />
					<path d="M652.500 388V192L823.500 290v197.500L653 389M738 340l-27 15" stroke="#ff8080" />
					<path d="M653 290l170.500-98v98M652.500 389v98.500L823.500 389M738 340l26 14" stroke="#80ff00" />
					<path d="M448 409l70 39c18 10 31.500 3 31.500-18v-20c0-26 13-44 36.500-37 5 1 9 2 14 5l106 61c18 10 31.500 3 31.500-18v-81" stroke="#f0f" />
				</g>
				<g>
					<path d="M280 603l-14 8" stroke="#c00000" strokeWidth="3" /><path d="M258 616l12-9 3 4z" fill="#e00000" />
					<path d="M280 603l12 7" stroke="#00c800" strokeWidth="3" /><path d="M302 616l-11-8-2 4z" fill="#00f000" stroke="#00d000" />
					<path d="M280 604v-17" stroke="#0070c0" strokeWidth="4" /><path d="M277 588l3-9 3 9z" fill="#1090f0" stroke="#0070c0" />
				</g>
				<g className="text-[12px] font-['Liberation_Serif',serif]">
					<text x="276" y="577" fill="#0090ff">Z</text>
					<text x="249" y="624" fill="#f00000">X</text>
					<text x="302" y="624" fill="#00f000">Y</text>
				</g>
			</svg>
		</div>
	);
}

function PropertyPanel() {
	return (
		<section className="h-[67px] shrink-0 flex pt-[7px] pr-[6px] pb-1">
			<span className="w-[3px] ml-px mr-[2px] bg-[repeating-linear-gradient(to_bottom,#999_0_2px,transparent_2px_4px)]" />
			<div className="flex-1 flex flex-col">
				<div className="h-9 p-[3px] border border-[#808080] border-b-black bg-[#f0f0f0]">
					<div className="h-full bg-gradient-to-b from-[#fafafa] to-[#d2d2d2]" />
				</div>
				<div className="flex-1 bg-gradient-to-b from-white to-[#b2b2b2]" />
			</div>
		</section>
	);
}

const tasks = [
	['D:\\Модели для...', <Svg><path d="M2 1h5l2 2v12H2z" fill="#f0d070" stroke="#b89030" /><path d="M7 3h6v12H7z" fill="#fff0a8" stroke="#c8a040" /></Svg>],
	['Методичка_КО...', <Svg><path d="M4.500.5h11v14h-11z" fill="#e8f0ff" stroke="#5070b0" /><path d="M.5 3.500h10v9H.5z" fill="#3060b8" stroke="#204080" /><path d="M2 5l1.500 6L5.500 6l2 5L9 5" stroke="#fff" strokeWidth="1.300" /></Svg>],
	['Безымянный - ...', <Svg><path d="M5 8h7l-1 7H6z" fill="#f0c8b0" stroke="#a06050" /><path d="M7 8L2 3M8 8V1M9 8l4-6" stroke="#805030" strokeWidth="1.500" /><path d="M1 2h3M12 3h3" stroke="#c03020" strokeWidth="2" /></Svg>],
	['КОМПАС-3D...', <Logo />],
	['КОМПАС-3D V12', <HelpDoc />],
	['Азбука КОМПАС', <HelpDoc />],
	['Азбука КОМПАС', <HelpDoc />],
];

function TaskBar() {
	const pressed = "border border-black border-b-white border-r-white bg-[repeating-conic-gradient(#fff_0_25%,#d0d0d0_0_50%)] bg-[length:2px_2px] font-bold font-['DejaVu_Sans_Condensed','DejaVu_Sans',sans-serif]";
	return (
		<footer className={`h-[27px] shrink-0 flex items-center px-[2px] border-t border-white ${face}`}>
			<button className={`w-[52px] h-[22px] mr-[5px] shrink-0 flex items-center gap-[2px] pl-[2px] ${raised} text-[12px] font-bold`}>
				<Svg>
					<path d="M2 3c2-1 4-1 5 0L6 7C5 6 3 6 1 7z" fill="#f05020" /><path d="M8 3c2 1 4 1 6 0l-1 4c-2 1-4 1-6 0z" fill="#70b830" />
					<path d="M1 8c2-1 4-1 5 0l-1 5c-2-1-3-1-5 0z" fill="#3080e0" /><path d="M7 8c2 1 4 1 6 0l-1 5c-2 1-4 1-6 0z" fill="#f8c020" />
				</Svg>
				Пуск
			</button>
			<div className="flex-1 min-w-0 flex gap-1">
				{tasks.map(([name, icon], i) => (
					<button key={i} className={`flex-1 min-w-0 h-[22px] flex items-center pl-1 whitespace-nowrap overflow-hidden ${i === 3 ? `gap-[3px] ${pressed}` : `gap-[5px] ${raised}`}`}>
						{icon}
						{name}
					</button>
				))}
			</div>
			<div className="w-[130px] h-[22px] ml-2 shrink-0 flex items-center gap-[3px] pl-1 pr-[6px] border border-[#808080] border-b-white border-r-white text-[12px]">
				<button aria-label="Показать значки" className="font-bold text-[14px] leading-4">«</button>
				<Svg><path d="M1 2h5v5l4-5h5l-5 6-4 5H1z" fill="#e81010" /><path d="M7 8l6 6M9 14h4v-4" stroke="#000" strokeWidth="2.500" /></Svg>
				<Svg><circle cx="8" cy="8" r="7.500" fill="#8fc0e8" /><circle cx="8" cy="8" r="5" fill="#b8dcf4" /><path d="M8 3v10" stroke="#f09030" strokeWidth="3" /></Svg>
				<span className="w-4 h-4 leading-4 text-center bg-[#808080] text-white">Ru</span>
				<Svg><circle cx="8" cy="8" r="7.500" fill="#0020c0" /><path d="M3 3c3-2 5 0 4 3s-5 1-5 4zM9 2c5 1 6 4 4 6l-3-2zM8 9l4 1-3 5z" fill="#20c020" /><path d="M6 3l3 1" stroke="#fff" strokeWidth="2" /></Svg>
				<time className="flex-1 text-right">22:05</time>
			</div>
		</footer>
	);
}

export default function App() {
	return (
		<div className="h-screen flex flex-col overflow-hidden text-black text-[11px] leading-4 font-['Liberation_Sans',Arial,sans-serif] bg-gradient-to-r from-[#c0c0c0] to-[#fafafa]">
			<TitleBar />
			<MenuBar />
			<Toolbars />
			<div className="flex-1 min-h-0 flex">
				<SideBar />
				<main className="flex-1 min-w-0 flex flex-col">
					<DocTabs />
					<div className="flex-1 min-h-0 flex gap-[2px] pr-[3px] pt-[2px] pb-[2px] border-2 border-t border-[#a8d0c4] border-b-[#a8d4c6]">
						<TreePanel />
						<Viewport />
					</div>
					<PropertyPanel />
				</main>
			</div>
			<div className="h-5 shrink-0 flex gap-[2px] pl-1 pb-[2px]">
				<p className="flex-1 h-[18px] pl-px border border-[#808080] leading-4">Щелкните левой кнопкой мыши на объекте для его выделения (вместе с Ctrl - добавить к выделенным)</p>
				<div className="w-[84px] h-[18px] border border-[#808080]" />
			</div>
			<TaskBar />
		</div>
	);
}
